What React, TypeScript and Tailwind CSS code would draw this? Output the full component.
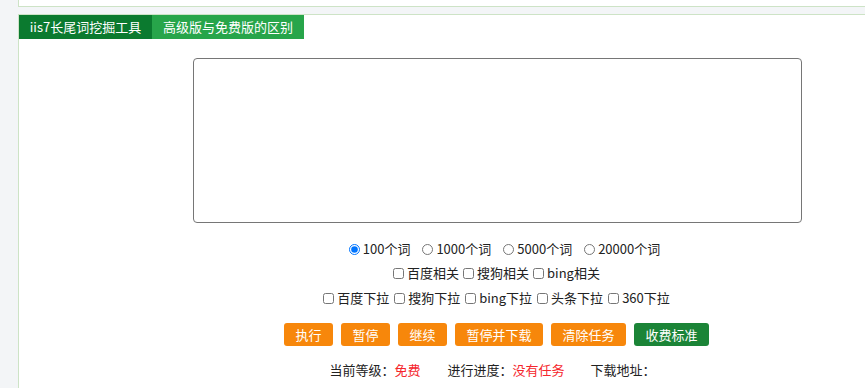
import { useState } from 'react';

const sizes = ['100个词', '1000个词', '5000个词', '20000个词'];
const related = ['百度相关', '搜狗相关', 'bing相关'];
const dropdowns = ['百度下拉', '搜狗下拉', 'bing下拉', '头条下拉', '360下拉'];
const actions = [
  { label: '执行', w: 'w-[49px]' },
  { label: '暂停', w: 'w-[49px]' },
  { label: '继续', w: 'w-[49px]' },
  { label: '暂停并下载', w: 'w-[88px]' },
  { label: '清除任务', w: 'w-[75px]' },
];

export default function App() {
  const [size, setSize] = useState(0);
  const [checked, setChecked] = useState<Record<string, boolean>>({});

  const toggle = (k: string) => setChecked((c) => ({ ...c, [k]: !c[k] }));

  return (
    <div
      className="w-[865px] h-[388px] overflow-hidden bg-[#f3f5f7] flex text-[13px] text-[#222]"
      style={{ fontFamily: '"Microsoft YaHei", "Noto Sans CJK SC", sans-serif' }}
    >
      <div className="w-[18px] shrink-0" />
      <div className="w-[956px] shrink-0 flex flex-col">
        {/* top box remnant */}
        <div className="h-[7px] bg-white border-l border-b border-[#cde3c6]" />
        <div className="h-[7px]" />

        <div className="flex-1 bg-white border-l border-t border-[#cde3c6] flex flex-col">
          {/* Tabs */}
          <div className="flex h-[24px]">
            <div className="w-[133px] bg-[#0b7a2f] text-white flex items-center justify-center">iis7长尾词挖掘工具</div>
            <div className="w-[152px] bg-[#27a54a] text-white flex items-center justify-center">高级版与免费版的区别</div>
          </div>

          <div className="flex flex-col items-center pt-[19px]">
            <textarea className="w-[609px] h-[165px] ml-[2px] border border-[#767676] rounded-[4px] resize-none outline-none p-1" />

            <div className="flex items-center gap-[12px] mt-[16px] h-[20px] ml-[16px]">
              {sizes.map((s, i) => (
                <label key={s} className="flex items-center cursor-pointer">
                  <input
                    type="radio"
                    name="size"
                    checked={size === i}
                    onChange={() => setSize(i)}
                    className="w-[11px] h-[11px] mr-[3px] accent-[#0075ff]"
                  />
                  {s}
                </label>
              ))}
            </div>

            <div className="flex items-center gap-[4px] mt-[4px] h-[20px]">
              {related.map((s) => (
                <label key={s} className="flex items-center cursor-pointer">
                  <input type="checkbox" checked={!!checked[s]} onChange={() => toggle(s)} className="w-[11px] h-[11px] mr-[3px]" />
                  {s}
                </label>
              ))}
            </div>

            <div className="flex items-center gap-[5px] mt-[5px] h-[20px]">
              {dropdowns.map((s) => (
                <label key={s} className="flex items-center cursor-pointer">
                  <input type="checkbox" checked={!!checked[s]} onChange={() => toggle(s)} className="w-[11px] h-[11px] mr-[3px]" />
                  {s}
                </label>
              ))}
            </div>

            <div className="flex gap-[8px] mt-[15px]">
              {actions.map((a) => (
                <button
                  key={a.label}
                  className={`${a.w} h-[23px] rounded-[3px] bg-[#f7870b] text-white text-[13px] flex items-center justify-center`}
                >
                  {a.label}
                </button>
              ))}
              <button className="w-[75px] h-[23px] rounded-[3px] bg-[#1b8437] text-white text-[13px] flex items-center justify-center">
                收费标准
              </button>
            </div>

            <div className="flex items-center mt-[15px] h-[18px] ml-[-8px]">
              <span>当前等级：</span>
              <span className="text-[#f5262c]">免费</span>
              <span className="ml-[27px]">进行进度：</span>
              <span className="text-[#f5262c]">没有任务</span>
              <span className="ml-[26px]">下载地址：</span>
            </div>
          </div>
        </div>
      </div>
    </div>
  );
}
